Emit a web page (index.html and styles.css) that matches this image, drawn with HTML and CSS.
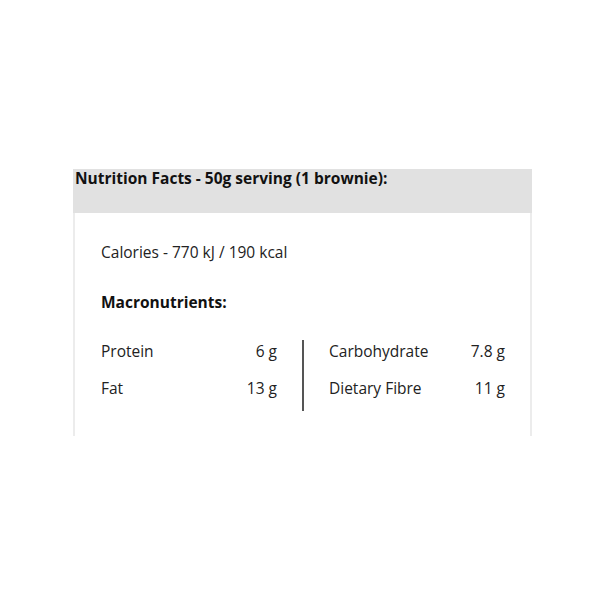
FILE: index.html
```html
<!DOCTYPE html>
<html>
<head>
<meta charset="utf-8">
<link rel="stylesheet" href="styles.css">
</head>
<body>
<div class="card">
  <div class="card-head">Nutrition Facts - 50g serving (1 brownie):</div>
  <div class="card-body">
    <p class="calories">Calories - 770 kJ / 190 kcal</p>
    <p class="macro-title">Macronutrients:</p>
    <div class="macros">
      <div class="col">
        <div class="row"><span>Protein</span><span>6 g</span></div>
        <div class="row"><span>Fat</span><span>13 g</span></div>
      </div>
      <div class="divider"></div>
      <div class="col">
        <div class="row"><span>Carbohydrate</span><span>7.8 g</span></div>
        <div class="row"><span>Dietary Fibre</span><span>11 g</span></div>
      </div>
    </div>
  </div>
</div>
</body>
</html>
```
FILE: styles.css
```css
html, body {
  margin: 0;
  padding: 0;
  background: #fff;
}
body {
  font-family: "Open Sans", "DejaVu Sans", sans-serif;
  color: #222;
  padding-top: 169px;
  padding-left: 73px;
}
.card {
  width: 459px;
}
.card-head {
  background: #e1e1e1;
  height: 44px;
  box-sizing: border-box;
  padding: 0 2px;
  font-size: 15.5px;
  font-weight: 700;
  line-height: 16px;
  padding-top: 1px;
  color: #111;
}
.card-body {
  border-left: 2px solid #ececec;
  border-right: 2px solid #ececec;
  padding: 28px 24px 25px 26px;
  font-size: 15.5px;
}
.card-body p {
  margin: 0;
  line-height: 22px;
}
.macro-title {
  font-weight: 700;
  margin-top: 28px !important;
  color: #111;
}
.macros {
  display: flex;
  margin-top: 27px;
  align-items: flex-start;
}
.col {
  width: 176px;
  display: flex;
  flex-direction: column;
  gap: 14.5px;
}
.row {
  display: flex;
  justify-content: space-between;
  line-height: 22px;
}
.divider {
  width: 2px;
  background: #555;
  margin: 0 25px;
  height: 71px;
}
```
